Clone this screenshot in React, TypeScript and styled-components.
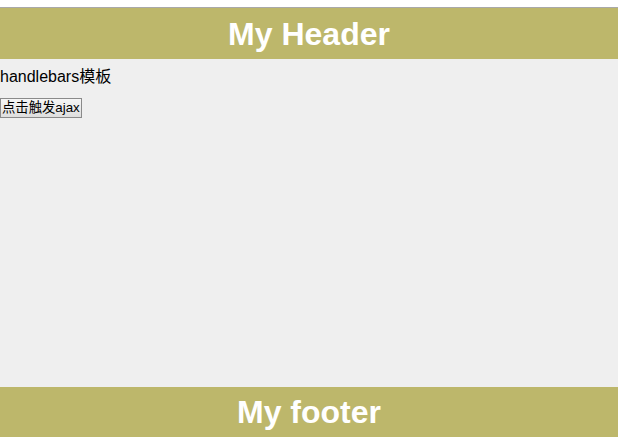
import React from "react";
import styled, { createGlobalStyle } from "styled-components";

const Global = createGlobalStyle`
  html, body { margin: 0; padding: 0; background: #ffffff; }
  body { font-family: "Liberation Sans", Arial, "Noto Sans CJK SC", sans-serif; }
`;

const Page = styled.div`
  display: flex;
  flex-direction: column;
  height: 437px;
  width: 618px;
  overflow: hidden;
`;

const TopStrip = styled.div`
  height: 7px;
  background: #ffffff;
  border-bottom: 1px solid #a9a9a9;
  flex: none;
`;

const Bar = styled.div<{ $h: number; $shift: number }>`
  flex: none;
  box-sizing: border-box;
  height: ${(p) => p.$h}px;
  padding-top: ${(p) => p.$shift}px;
  background: #bdb76b;
  color: #ffffff;
  display: flex;
  align-items: center;
  justify-content: center;
  font-size: 32px;
  font-weight: bold;
`;

const Main = styled.div`
  flex: 1;
  background: #efefef;
  padding-top: 9px;
  display: flex;
  flex-direction: column;
  align-items: flex-start;
`;

const Title = styled.div`
  font-size: 16px;
  color: #000000;
  line-height: 18px;
`;

const Action = styled.button`
  margin-top: 12px;
  font-family: "Liberation Sans", Arial, "Noto Sans CJK SC", sans-serif;
  font-size: 13.33px;
  padding: 1px 1px;
  height: 20px;
  border: 1px solid #8a8a8a;
  border-radius: 0;
  background: linear-gradient(#f6f6f6, #dedede);
  color: #000;
  line-height: 16px;
`;

export default function App() {
  return (
    <>
      <Global />
      <Page>
        <TopStrip />
        <Bar $h={51} $shift={2}>My Header</Bar>
        <Main>
          <Title>handlebars模板</Title>
          <Action>点击触发ajax</Action>
        </Main>
        <Bar $h={50} $shift={0}>My footer</Bar>
      </Page>
    </>
  );
}
